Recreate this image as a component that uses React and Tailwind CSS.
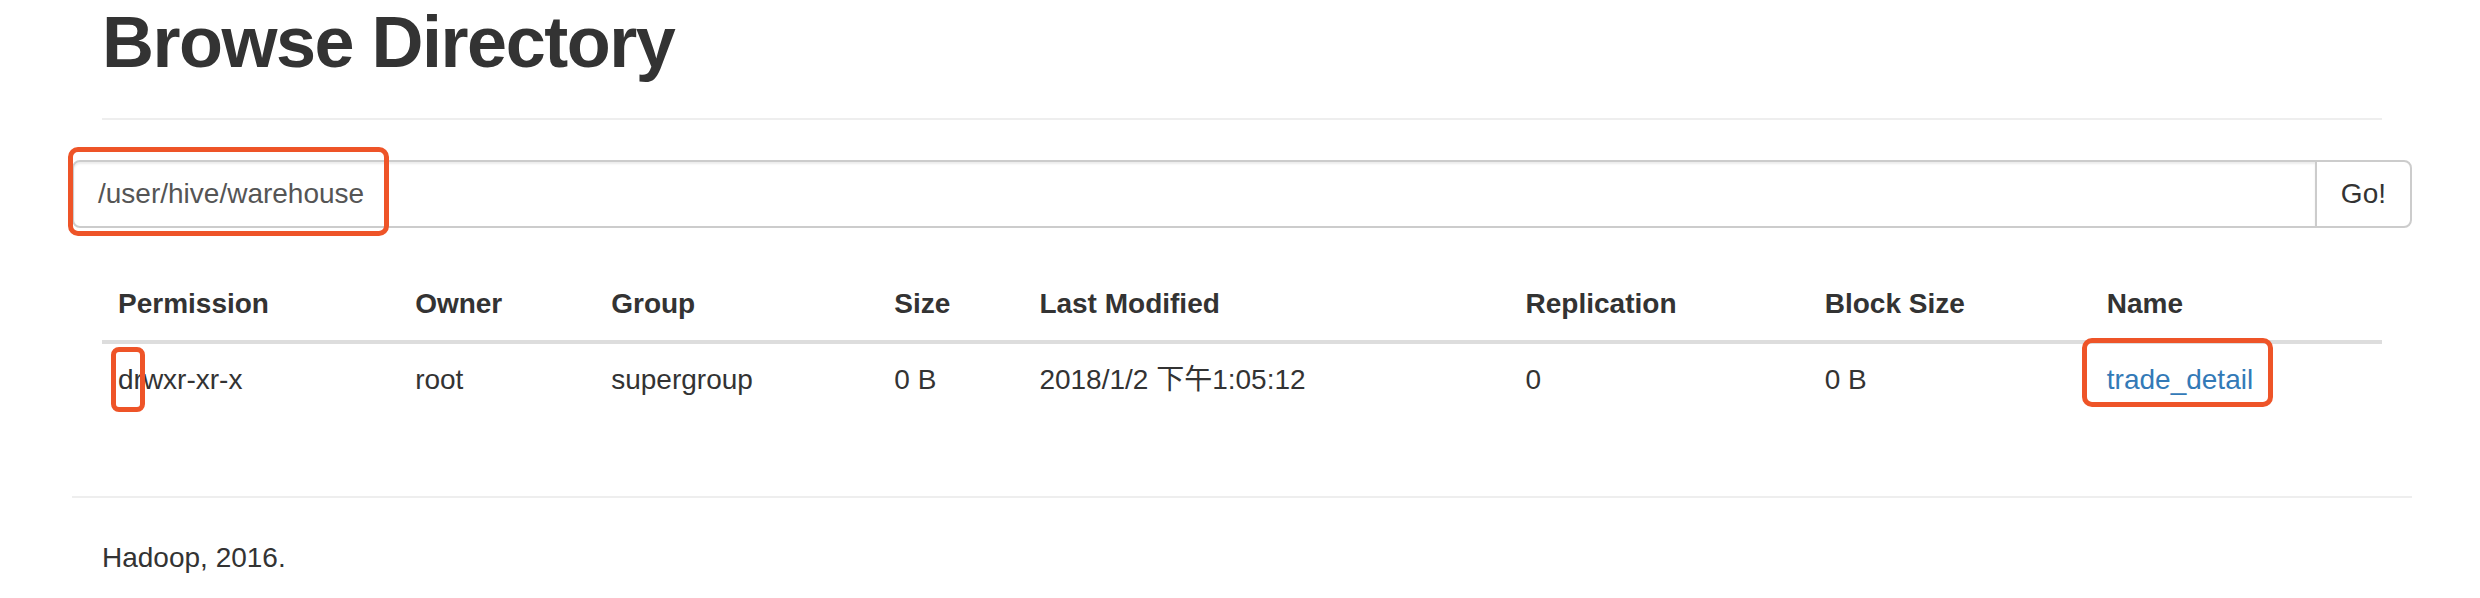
import React from "react";

const cols = [
  { label: "Permission", w: "w-[297px]" },
  { label: "Owner", w: "w-[196px]" },
  { label: "Group", w: "w-[283px]" },
  { label: "Size", w: "w-[145px]" },
  { label: "Last Modified", w: "w-[486px]" },
  { label: "Replication", w: "w-[299px]" },
  { label: "Block Size", w: "w-[282px]" },
  { label: "Name", w: "w-[291px]" },
];

export default function App() {
  return (
    <div className="relative h-[598px] w-full overflow-hidden bg-white font-['Liberation_Sans','Noto_Sans_CJK_SC',sans-serif] text-[28px] leading-[40px] text-[#333333]">
      <div className="ml-[102px] w-[2280px]">
        <div className="border-b-2 border-[#eeeeee] pb-[36px] pt-[3px]">
          <h1 className="text-[72px] font-bold leading-[79px] tracking-[-1.5px] text-[#333333]">
            Browse Directory
          </h1>
        </div>

        <div className="-mx-[30px] mt-[40px] flex h-[68px]">
          <div className="flex flex-1 items-center rounded-l-[8px] border-2 border-[#cccccc] px-[24px] text-[#555555] shadow-[inset_0_2px_2px_rgba(0,0,0,0.075)]">
            /user/hive/warehouse
          </div>
          <button className="-ml-[2px] flex h-[68px] items-center rounded-r-[8px] border-2 border-[#cccccc] bg-white px-[24px] text-[#333333]">
            Go!
          </button>
        </div>

        <table className="mt-[40px] w-full table-fixed border-separate border-spacing-0">
          <colgroup>
            {cols.map((c) => (
              <col key={c.label} className={c.w} />
            ))}
          </colgroup>
          <thead>
            <tr>
              {cols.map((c) => (
                <th
                  key={c.label}
                  className="border-b-4 border-[#dddddd] p-[16px] text-left font-bold leading-[40px]"
                >
                  {c.label}
                </th>
              ))}
            </tr>
          </thead>
          <tbody>
            <tr>
              <td className="p-[16px]">drwxr-xr-x</td>
              <td className="p-[16px]">root</td>
              <td className="p-[16px]">supergroup</td>
              <td className="p-[16px]">0 B</td>
              <td className="p-[16px]">2018/1/2 下午1:05:12</td>
              <td className="p-[16px]">0</td>
              <td className="p-[16px]">0 B</td>
              <td className="p-[16px]">
                <a className="text-[#337ab7]" href="#">
                  trade_detail
                </a>
              </td>
            </tr>
          </tbody>
        </table>

        <div className="-mx-[30px] mt-[80px] border-t-2 border-[#eeeeee]" />
        <p className="mt-[40px]">Hadoop, 2016.</p>
      </div>

      <div className="absolute left-[68px] top-[147px] h-[89px] w-[321px] rounded-[10px] border-[5px] border-[#ee5428]" />
      <div className="absolute left-[111px] top-[347px] h-[65px] w-[34px] rounded-[8px] border-[5px] border-[#ee5428]" />
      <div className="absolute left-[2082px] top-[338px] h-[69px] w-[191px] rounded-[10px] border-[5px] border-[#ee5428]" />
    </div>
  );
}
